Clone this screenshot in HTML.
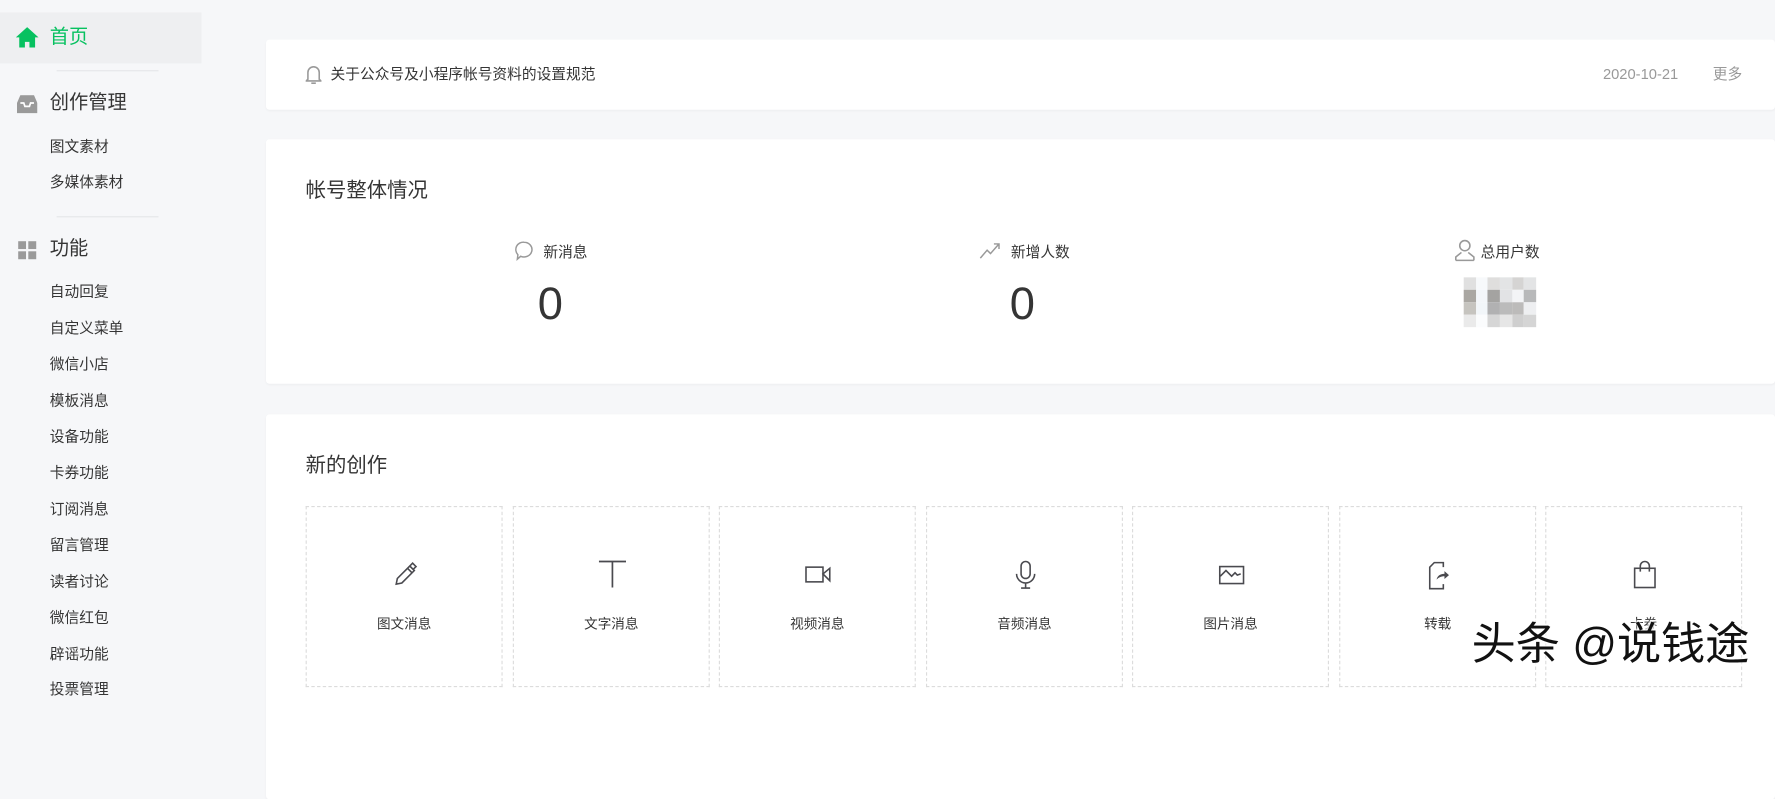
<!DOCTYPE html>
<html><head><meta charset="utf-8"><style>
*{margin:0;padding:0;box-sizing:border-box}
body{width:1775px;height:694px;overflow:hidden;background:#f6f7f9;font-family:"Liberation Sans","Noto Sans CJK SC",sans-serif;color:#353535;line-height:1.2}
#w{position:absolute;left:0;top:0;width:1568px;height:613px;transform:scale(1.13202);transform-origin:0 0}
.a{position:absolute}
.side .t{position:absolute;left:44px;font-size:17px;color:#353535}
.side .s{position:absolute;left:44px;font-size:13px;color:#353535}
.div{position:absolute;left:50px;width:90px;height:1px;background:#e4e6e9}
.card{position:absolute;left:235px;right:0;background:#fff;border-radius:3px;box-shadow:0 1px 2px rgba(0,0,0,.04)}
.box{position:absolute;top:447px;width:174px;height:160px;border:1px dashed #dcdcdc}
.box svg{position:absolute;left:75px;top:47px}
.box span{position:absolute;left:0;right:0;top:96px;text-align:center;font-size:12px;color:#353535}
</style></head><body><div id="w">
<div class="side">
<div class="a" style="left:0;top:11px;width:178px;height:45px;background:#eeeff1"></div>
<svg class="a" style="left:14px;top:24px" width="20" height="18" viewBox="0 0 20 18"><path d="M10 0L0 9h3v9h5v-5h4v5h5V9h3z" fill="#07c160"/></svg>
<div class="t" style="top:23px;color:#07c160">首页</div>
<div class="div" style="top:62px"></div>
<svg class="a" style="left:15px;top:84px" width="18" height="16" viewBox="0 0 18 16"><path d="M3 0h12l3 7v9H0V7z" fill="#9a9a9a"/><path d="M3 7h3l1 3h4l1-3h3" fill="none" stroke="#fff" stroke-width="1.5"/></svg>
<div class="t" style="top:81px">创作管理</div>
<div class="s" style="top:122px">图文素材</div>
<div class="s" style="top:153px">多媒体素材</div>
<div class="div" style="top:191px"></div>
<svg class="a" style="left:16px;top:213px" width="17" height="17"><rect x="0" y="0" width="7" height="7" fill="#9a9a9a"/><rect x="9" y="0" width="7" height="7" fill="#9a9a9a"/><rect x="0" y="9" width="7" height="7" fill="#9a9a9a"/><rect x="9" y="9" width="7" height="7" fill="#9a9a9a"/></svg>
<div class="t" style="top:210px">功能</div>
<div class="s" style="top:250px">自动回复</div>
<div class="s" style="top:282px">自定义菜单</div>
<div class="s" style="top:314px">微信小店</div>
<div class="s" style="top:346px">模板消息</div>
<div class="s" style="top:378px">设备功能</div>
<div class="s" style="top:410px">卡券功能</div>
<div class="s" style="top:442px">订阅消息</div>
<div class="s" style="top:474px">留言管理</div>
<div class="s" style="top:506px">读者讨论</div>
<div class="s" style="top:538px">微信红包</div>
<div class="s" style="top:570px">辟谣功能</div>
<div class="s" style="top:601px">投票管理</div>
</div>

<div class="card" style="top:35px;height:62px">
<svg class="a" style="left:35px;top:22px" width="14" height="18" viewBox="0 0 14 18"><path d="M2 13V7a5 5 0 0 1 10 0v6l1.5 1.5h-13z" fill="none" stroke="#9a9a9a" stroke-width="1.4"/><path d="M5 16.5h4" stroke="#9a9a9a" stroke-width="1.5"/></svg>
<div class="a" style="left:57px;top:23px;font-size:13px">关于公众号及小程序帐号资料的设置规范</div>
<div class="a" style="left:1181px;top:23px;font-size:13px;color:#999">2020-10-21</div>
<div class="a" style="left:1278px;top:23px;font-size:13px;color:#999">更多</div>
</div>

<div class="card" style="top:123px;height:216px">
<div class="a" style="left:35px;top:35px;font-size:18px">帐号整体情况</div>
<svg class="a" style="left:220px;top:90px" width="16" height="18" viewBox="0 0 16 18"><path d="M8 1a7 6.5 0 1 1-3 12.4L2 16l.5-4A6.5 6.5 0 0 1 8 1z" fill="none" stroke="#999" stroke-width="1.3"/></svg>
<div class="a" style="left:245px;top:92px;font-size:13px">新消息</div>
<div class="a" style="left:240px;top:122px;font-size:40px;font-weight:300">0</div>
<svg class="a" style="left:630px;top:90px" width="20" height="16" viewBox="0 0 20 16"><path d="M1 15l6-7 3 3 7-8M13 2.5h4.5V7" fill="none" stroke="#999" stroke-width="1.3"/></svg>
<div class="a" style="left:658px;top:92px;font-size:13px">新增人数</div>
<div class="a" style="left:657px;top:122px;font-size:40px;font-weight:300">0</div>
<svg class="a" style="left:1050px;top:88px" width="18" height="20" viewBox="0 0 18 20"><circle cx="9" cy="6" r="4.5" fill="none" stroke="#999" stroke-width="1.4"/><path d="M1 19v-3l5-4M17 19v-3l-5-4M1 19h16" fill="none" stroke="#999" stroke-width="1.4"/></svg>
<div class="a" style="left:1073px;top:92px;font-size:13px">总用户数</div>
<div class="a" style="left:1058px;top:122px;width:64px;height:44px;display:grid;grid-template-columns:repeat(6,1fr)">
<i style="background:#e0e0e0"></i><i style="background:#f7f9fb"></i><i style="background:#dfdedd"></i><i style="background:#e3e4e5"></i><i style="background:#d5d4d3"></i><i style="background:#e3e4e5"></i>
<i style="background:#aaa7a2"></i><i style="background:#f3f6f9"></i><i style="background:#a4a3a1"></i><i style="background:#e2e3e5"></i><i style="background:#f3f4f6"></i><i style="background:#b8b9ba"></i>
<i style="background:#c6c4bf"></i><i style="background:#f2f6f9"></i><i style="background:#b1b1b2"></i><i style="background:#bbbbbb"></i><i style="background:#bcbbba"></i><i style="background:#eeeff1"></i>
<i style="background:#eaeaea"></i><i style="background:#fbfcfd"></i><i style="background:#d6d6d6"></i><i style="background:#e6e6e6"></i><i style="background:#cfcfcf"></i><i style="background:#d5d5d5"></i>
</div>
</div>

<div class="card" style="top:366px;height:340px">
<div class="a" style="left:35px;top:35px;font-size:18px">新的创作</div>
</div>

<div class="box" style="left:270px"><svg width="24" height="24" viewBox="0 0 24 24"><path d="M4 21l1-5L16 5l4 4L9 20z M14 7l4 4 M16.5 4.5l2-2 3 3-2 2" fill="none" stroke="#4a4a4f" stroke-width="1.4"/></svg><span>图文消息</span></div>
<div class="box" style="left:453px"><svg width="24" height="24" viewBox="0 0 24 24"><path d="M0 1h24M12 1v24" fill="none" stroke="#4a4a4f" stroke-width="1.5"/></svg><span>文字消息</span></div>
<div class="box" style="left:635px"><svg width="24" height="24" viewBox="0 0 24 24"><rect x="1" y="6" width="15" height="13" fill="none" stroke="#4a4a4f" stroke-width="1.4"/><path d="M16 12l6-5v11z" fill="none" stroke="#4a4a4f" stroke-width="1.4"/></svg><span>视频消息</span></div>
<div class="box" style="left:818px"><svg width="24" height="26" viewBox="0 0 24 26"><rect x="8" y="1" width="8" height="15" rx="4" fill="none" stroke="#4a4a4f" stroke-width="1.4"/><path d="M4 12a8 8 0 0 0 16 0M12 20v4M8 24.5h8" fill="none" stroke="#4a4a4f" stroke-width="1.4"/></svg><span>音频消息</span></div>
<div class="box" style="left:1000px"><svg width="24" height="24" viewBox="0 0 24 24"><rect x="1.5" y="5.5" width="21" height="15" fill="none" stroke="#4a4a4f" stroke-width="1.4"/><path d="M2 14l5-5 5 5 3-3 2 2 3-1" fill="none" stroke="#4a4a4f" stroke-width="1.4"/></svg><span>图片消息</span></div>
<div class="box" style="left:1183px"><svg width="24" height="26" viewBox="0 0 24 26"><path d="M16 6V2H8L4 6v19h12v-4" fill="none" stroke="#4a4a4f" stroke-width="1.4"/><path d="M10 17c1-4 4-5 7-5v-2.5l4 3.5-4 3.5v-2.5c-3 0-5 1-7 3z" fill="#4a4a4f"/></svg><span>转载</span></div>
<div class="box" style="left:1365px"><svg width="24" height="26" viewBox="0 0 24 26"><rect x="3" y="7" width="18" height="17" fill="none" stroke="#4a4a4f" stroke-width="1.4"/><path d="M8 10V5a4 4 0 0 1 8 0v5" fill="none" stroke="#4a4a4f" stroke-width="1.4"/></svg><span>卡券</span></div>

<div class="a" style="left:1300px;top:550px;font-size:39px;line-height:1;color:#111;white-space:nowrap;text-shadow:1px 1px 2px #fff,-1px -1px 2px #fff">头条 @说钱途</div>
</div></body></html>
